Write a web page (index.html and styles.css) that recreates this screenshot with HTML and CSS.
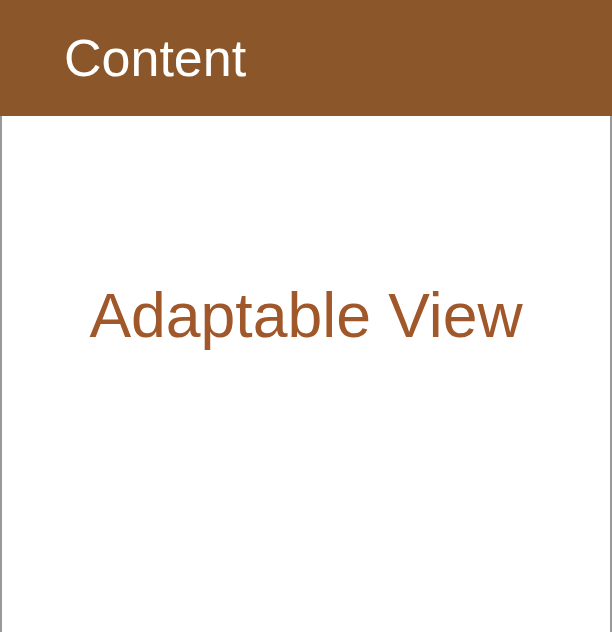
FILE: index.html
```html
<!DOCTYPE html>
<html>
<head>
<meta charset="utf-8">
<link rel="stylesheet" href="styles.css">
</head>
<body>
<header class="topbar"><span class="title">Content</span></header>
<main class="panel"><div class="label">Adaptable View</div></main>
</body>
</html>
```
FILE: styles.css
```css
html, body { margin: 0; padding: 0; background: #fff; }
body { font-family: "Liberation Sans", Arial, sans-serif; width: 612px; height: 632px; overflow: hidden; }
.topbar { height: 116px; background: #8B572A; display: flex; align-items: center; padding-left: 64px; box-sizing: border-box; }
.title { color: #fff; font-size: 52px; line-height: 1; }
.panel { height: 516px; box-sizing: border-box; border-left: 2px solid #999; border-right: 2px solid #999; display: flex; justify-content: center; padding-top: 168px; }
.label { color: #A0582A; font-size: 62.5px; line-height: 1; }
```
